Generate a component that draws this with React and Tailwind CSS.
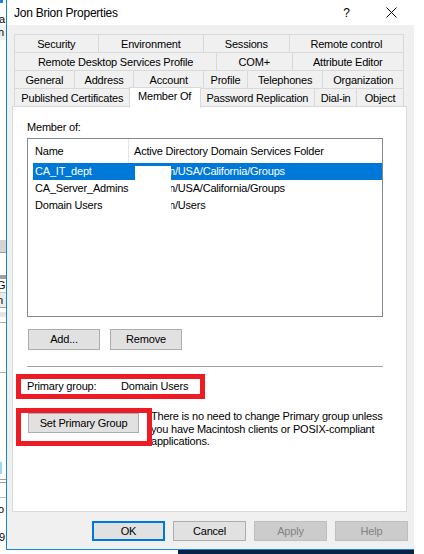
import React from "react";

const F = { fontFamily: '"Liberation Sans", Arial, sans-serif' };

function Tab({ w, children, first, selected }) {
  if (selected) {
    return (
      <div
        className={`relative z-10 -mt-[2px] h-[21px] bg-white border border-b-0 border-[#d9d9d9] -mx-px flex justify-center pt-[2px] leading-[13px] whitespace-nowrap`}
        style={{ width: w + 1 }}
      >
        {children}
      </div>
    );
  }
  return (
    <div
      className={`h-[18px] flex items-center justify-center leading-[13px] whitespace-nowrap ${first ? "" : "border-l border-[#d9d9d9]"}`}
      style={{ width: w }}
    >
      {children}
    </div>
  );
}

function Row({ tabs }) {
  return (
    <div className="flex items-start h-[18px] border-t border-x border-[#d9d9d9]">
      {tabs.map((t, i) => (
        <Tab key={t[0]} w={t[1]} first={i === 0} selected={t[2]}>
          {t[0]}
        </Tab>
      ))}
    </div>
  );
}

function Btn({ w, h = 20, children, primary, disabled, className = "" }) {
  return (
    <div
      className={`flex items-center justify-center leading-[13px] whitespace-nowrap ${
        primary
          ? "border-2 border-[#0078d7] bg-[#e1e1e1] text-black"
          : disabled
          ? "border border-[#bfbfbf] bg-[#cccccc] text-[#838383]"
          : "border border-[#adadad] bg-[#e1e1e1] text-black"
      } ${className}`}
      style={{ width: w, height: h }}
    >
      {children}
    </div>
  );
}

function LeftStrip() {
  return (
    <div className="w-[6px] h-[550px] flex flex-col overflow-hidden text-[11px] leading-[12px] text-black">
      <div className="h-[3px] w-[3px] bg-[#1883d7]" />
      <div className="h-[10px] bg-white" />
      <div className="h-[12px] bg-white overflow-hidden"><span className="block -ml-[1px]">a</span></div>
      <div className="h-[15px] bg-[#f0f0f0] overflow-hidden pt-[1px]"><span className="block -ml-[2px]">n</span></div>
      <div className="h-[200px] bg-white" />
      <div className="h-[12px] bg-[#d4d4d4]" />
      <div className="h-[1px] bg-[#a0a0a0]" />
      <div className="h-[22px] bg-white" />
      <div className="h-[4px] bg-[#9f9f9f]" />
      <div className="h-[13px] bg-white overflow-hidden"><span className="block -ml-[3px]">G</span></div>
      <div className="h-[1px] bg-[#c8c8c8]" />
      <div className="h-[14px] bg-[#ebebeb] overflow-hidden pt-[1px]"><span className="block -ml-[3px]">n</span></div>
      <div className="h-[1px] bg-[#a0a0a0]" />
      <div className="h-[4px] bg-white" />
      <div className="h-[5px] bg-[#e5e5e5]" />
      <div className="h-[5px] bg-white" />
      <div className="h-[1px] bg-[#b0b0b0]" />
      <div className="h-[49px] bg-white" />
      <div className="h-[1px] bg-[#b0b0b0]" />
      <div className="h-[89px] bg-white" />
      <div className="h-[12px] bg-white flex"><div className="w-[2px] h-full bg-[#99d9ea]" /></div>
      <div className="h-[5px] bg-white" />
      <div className="h-[1px] bg-[#a0a0a0]" />
      <div className="h-[2px] bg-white" />
      <div className="h-[1px] bg-[#a0a0a0]" />
      <div className="h-[14px] bg-white" />
      <div className="h-[1px] bg-[#c0c0c0]" />
      <div className="h-[5px] bg-white" />
      <div className="h-[12px] bg-white overflow-hidden"><span className="block -ml-[2px]">o</span></div>
      <div className="h-[16px] bg-white" />
      <div className="h-[12px] bg-white overflow-hidden"><span className="block -ml-[1px]">9,</span></div>
      <div className="flex-1 bg-white" />
    </div>
  );
}

export default function App() {
  const rows = [
    [["Security", 83], ["Environment", 106], ["Sessions", 86], ["Remote control", 115]],
    [["Remote Desktop Services Profile", 202], ["COM+", 76], ["Attribute Editor", 112]],
    [["General", 59], ["Address", 60], ["Account", 70], ["Profile", 44], ["Telephones", 76], ["Organization", 81]],
    [["Published Certificates", 115], ["Member Of", 71, true], ["Password Replication", 115], ["Dial-in", 42], ["Object", 47]],
  ];

  const listRows = [
    { name: "CA_IT_dept", path: "m/USA/California/Groups", sel: true },
    { name: "CA_Server_Admins", path: "m/USA/California/Groups" },
    { name: "Domain Users", path: "m/Users" },
  ];

  return (
    <div
      className="relative w-[424px] h-[554px] bg-white overflow-hidden flex flex-col text-[11px] tracking-[-0.2px] text-black"
      style={F}
    >
      <div className="flex h-[550px]">
        <LeftStrip />
        <div className="w-[408px] h-[550px] border-l border-b border-[#1883d7] flex flex-col bg-[#f0f0f0]">
          {/* Title bar */}
          <div className="h-[25px] bg-white flex items-center shrink-0">
            <span className="pl-[7px] text-[12px] tracking-[-0.25px] leading-[14px]">Jon Brion Properties</span>
            <span className="ml-auto text-[12px] leading-[14px] tracking-normal">?</span>
            <svg className="ml-[36px] mr-[17px]" width="11" height="11" viewBox="0 0 11 11">
              <path d="M0.5 0.5 L10.5 10.5 M10.5 0.5 L0.5 10.5" stroke="#000" strokeWidth="1" fill="none" />
            </svg>
          </div>

          {/* Tabs */}
          <div className="mt-[9px] ml-[7px] w-[390px] flex flex-col">
            {rows.map((r, i) => (
              <Row key={i} tabs={r} />
            ))}
          </div>

          {/* Panel */}
          <div className="ml-[5px] w-[395px] h-[406px] bg-white border border-[#d9d9d9] flex flex-col pl-[14px]">
            <div className="mt-[14px] h-[13px] leading-[13px]">Member of:</div>
            <div className="mt-[4px] w-[356px] h-[179px] border border-[#828790] flex flex-col">
              <div className="h-[24px] flex items-stretch">
                <div className="w-[101px] border-r border-[#e5e5e5] flex items-center pl-[7px] leading-[13px]">Name</div>
                <div className="flex items-center pl-[5px] leading-[13px] whitespace-nowrap">
                  Active Directory Domain Services Folder
                </div>
              </div>
              {listRows.map((r) => (
                <div
                  key={r.name}
                  className={`ml-[5px] w-[349px] h-[17px] flex items-stretch leading-[13px] ${
                    r.sel ? "bg-[#0078d7] text-white" : "text-black"
                  }`}
                >
                  <div className="w-[102px] pl-[2px] flex items-center whitespace-nowrap">{r.name}</div>
                  <div className="w-[36px] flex flex-col">
                    <div className="h-[3px]" />
                    <div className="flex-1 bg-white" />
                  </div>
                  <div className="flex-1 overflow-hidden flex items-center">
                    <span className="-ml-[5px] whitespace-nowrap">{r.path}</span>
                  </div>
                </div>
              ))}
            </div>

            <div className="mt-[12px] flex ml-[1px]">
              <Btn w={72} h={21}>Add...</Btn>
              <Btn w={72} h={21} className="ml-[10px]">Remove</Btn>
            </div>

            <div className="mt-[16px] w-[356px] h-[1px] bg-[#a0a0a0]" />

            <div className="mt-[13px] h-[13px] leading-[13px] flex">
              <div className="w-[94px]">Primary group:</div>
              <div>Domain Users</div>
            </div>

            <div className="mt-[20px] flex items-start ml-[1px]">
              <Btn w={111} h={20}>Set Primary Group</Btn>
              <div className="ml-[12px] -mt-[3px] leading-[12.5px] whitespace-nowrap">
                There is no need to change Primary group unless
                <br />
                you have Macintosh clients or POSIX-compliant
                <br />
                applications.
              </div>
            </div>
          </div>

          {/* Bottom buttons */}
          <div className="mt-[9px] flex justify-end gap-[8px] pr-[6px]">
            <Btn w={73} primary>OK</Btn>
            <Btn w={73}>Cancel</Btn>
            <Btn w={73} disabled>Apply</Btn>
            <Btn w={73} disabled>Help</Btn>
          </div>
        </div>
        <div className="flex-1 bg-white" />
      </div>
      <div className="h-[4px] flex">
        <div className="w-[178px] bg-white" />
        <div className="w-[236px] bg-[#0a2246]" />
        <div className="flex-1 bg-white" />
      </div>

      {/* Red annotation boxes */}
      <div className="absolute left-[16px] top-[374px] w-[189px] h-[25px] border-[5px] border-[#ed1c24]" />
      <div className="absolute left-[16px] top-[408px] w-[136px] h-[38px] border-[5px] border-[#ed1c24]" />
    </div>
  );
}
